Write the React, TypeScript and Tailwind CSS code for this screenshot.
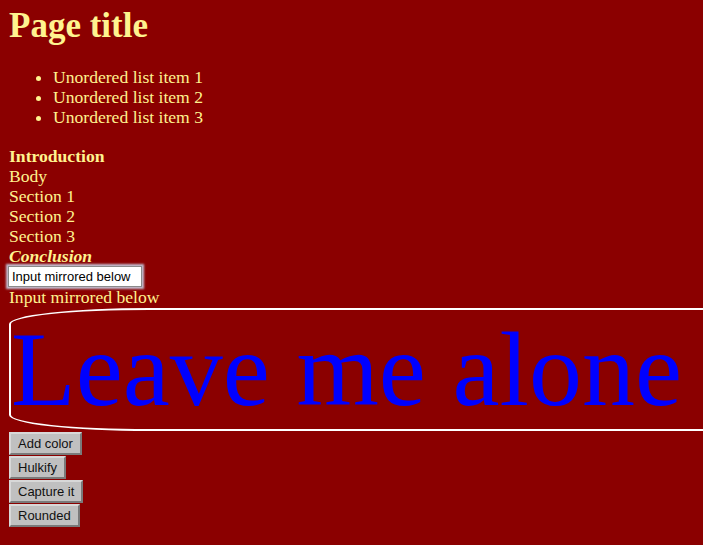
import React, { useState } from "react";

const serif = "font-['Liberation_Serif','Times_New_Roman',serif]";
const sans = "font-['Liberation_Sans',Arial,sans-serif]";

const buttons = ["Add color", "Hulkify", "Capture it", "Rounded"];

export default function App() {
    const [value, setValue] = useState("Input mirrored below");

    return (
        <div
            className={`min-h-[545px] w-full overflow-hidden bg-[#8b0000] pl-[9px] text-[#fff38f] ${serif}`}
        >
            <h1 className="pt-[6px] text-[35px] font-bold leading-[40px]">
                Page title
            </h1>
            <ul className="mt-[21px] list-disc pl-[44px] text-[17.6px] leading-[20px]">
                <li>Unordered list item 1</li>
                <li>Unordered list item 2</li>
                <li>Unordered list item 3</li>
            </ul>
            <div className="mt-[19px] text-[17.6px] leading-[20px]">
                <div className="font-bold">Introduction</div>
                <div>Body</div>
                <div>Section 1</div>
                <div>Section 2</div>
                <div>Section 3</div>
                <div className="font-bold italic">Conclusion</div>
            </div>
            <input
                value={value}
                onChange={(e) => setValue(e.target.value)}
                className={`-ml-px block h-[21px] w-[134px] border border-[#8a8a8a] bg-white px-[3px] text-[13px] text-black shadow-[0_0_2px_2px_rgba(200,210,230,0.9)] outline-none ${sans}`}
            />
            <div className="text-[17.6px] leading-[20px]">{value}</div>
            <div className="mt-px w-[760px] rounded-tl-[140px_16px] rounded-bl-[140px_16px] border-2 border-white text-[106px] leading-[119px] text-[#0000ff]">
                Leave me alone
            </div>
            <div className="flex flex-col items-start gap-px pt-px">
                {buttons.map((b) => (
                    <button
                        key={b}
                        className={`h-[23px] border-2 border-t-[#d8d8d8] border-l-[#d8d8d8] border-r-[#7a7a7a] border-b-[#7a7a7a] bg-[#c0c0c0] px-[7px] text-[13px] leading-[17px] text-[#111] ${sans}`}
                    >
                        {b}
                    </button>
                ))}
            </div>
        </div>
    );
}
